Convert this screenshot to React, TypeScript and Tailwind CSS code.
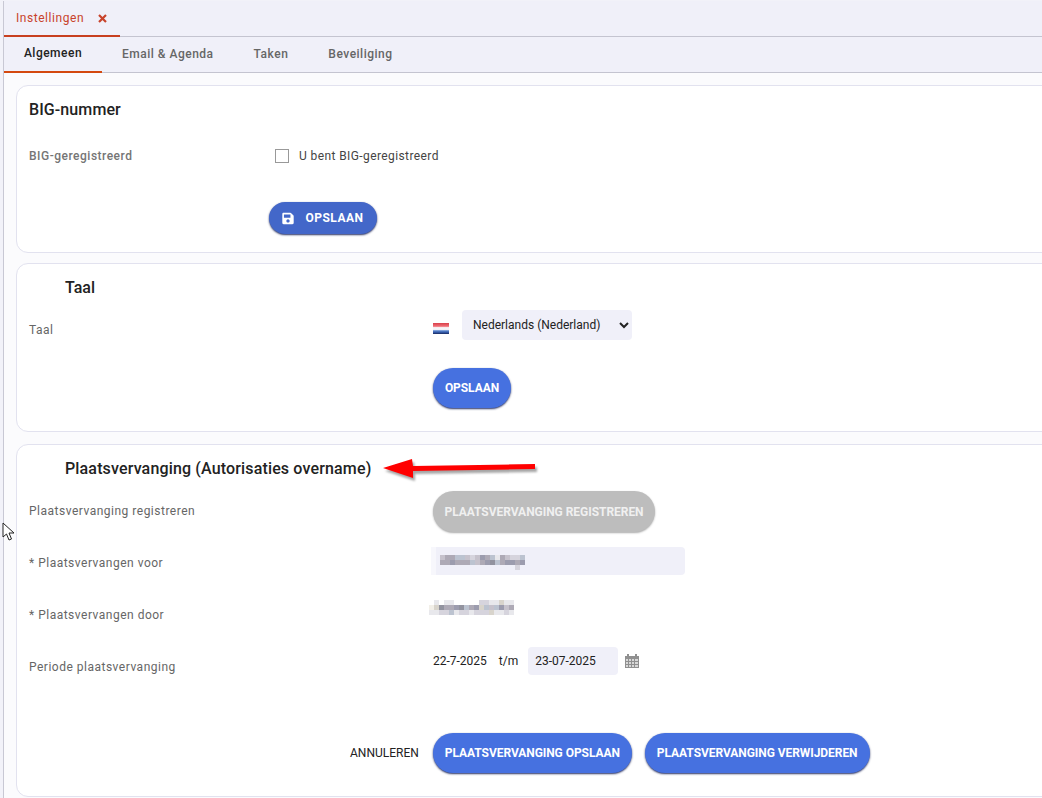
import type { ReactNode } from 'react'

const font = "font-['Roboto',sans-serif]"

const Label = ({ children, className = '' }: { children: ReactNode; className?: string }) => (
  <div className={`w-[404px] shrink-0 text-[12px] tracking-[0.5px] text-[#666] ${className}`}>{children}</div>
)

const Pill = ({ children, className = '' }: { children: ReactNode; className?: string }) => (
  <button className={`h-[40px] rounded-full bg-[#4671e0] px-3 text-[12px] font-bold tracking-[-0.06px] text-white shadow-[0_1px_2px_rgba(15,25,80,0.9)] ${className}`}>
    {children}
  </button>
)

const Mosaic = ({ rows, colors, w, h }: { rows: string[]; colors: Record<string, string>; w: number; h: number }) => (
  <svg width={w} height={h} viewBox={`0 0 ${w} ${h}`} shapeRendering="crispEdges" className="block">
    {rows.map((row, y) =>
      row.split('').map((c, x) => (colors[c] ? <rect key={`${x}-${y}`} x={x * 5} y={y * 5} width="5" height="5" fill={colors[c]} /> : null))
    )}
  </svg>
)

const colorsMosaic: Record<string, string> = {
  a: '#c6c2cc', b: '#aeaab6', c: '#bcc3d0', d: '#d6d4dd', e: '#9c9cae', f: '#e8e8ec', g: '#92939f', h: '#d8d4cc', i: '#f2efe8',
}

export default function App() {
  return (
    <div className={`${font} relative h-[798px] w-[1042px] overflow-hidden bg-[#f2f2f9] pl-[3px] pt-[1px]`}>
      <div className="min-h-[797px] border-l border-[#c8c8d4] bg-[#fbfbfd]">
        <div className="flex h-[36px] border-b border-[#c4c4d0] bg-[#f0f0f9]">
          <div className="flex h-[36px] w-[116px] items-center gap-[14px] border-b-2 border-[#c8401f] pl-3 text-[12px] tracking-[0.55px] text-[#c8432b]">
            Instellingen
            <svg width="9" height="9" viewBox="0 0 9 9" stroke="#c8432b" strokeWidth="2.2" fill="none">
              <path d="M1 1l7 7M8 1l-7 7" />
            </svg>
          </div>
        </div>
        <div className="flex h-[36px] border-b border-[#c4c4d0] bg-[#f0f0f9] text-[12px] font-medium tracking-[0.5px]">
          <div className="flex h-[36px] w-[98px] items-center justify-center border-b-2 border-[#d4490f] pb-[2px] text-[#222]">Algemeen</div>
          <div className="ml-[20px] flex h-[33px] items-center text-[#666]">Email &amp; Agenda</div>
          <div className="ml-[40px] flex h-[33px] items-center text-[#666]">Taken</div>
          <div className="ml-[40px] flex h-[33px] items-center text-[#666]">Beveiliging</div>
        </div>

        <div className="pl-[12px] pt-[12px]">
          <section className="h-[168px] w-[1100px] rounded-xl border border-[#e2e2ef] bg-white pl-3 pt-[14px]">
            <h2 className="text-[16px] font-medium leading-5 tracking-[0.1px] text-[#222]">BIG-nummer</h2>
            <div className="mt-[27px] flex h-[18px] items-center">
              <div className="w-[246px] text-[12px] font-medium tracking-[0.5px] text-[#757575]">BIG-geregistreerd</div>
              <span className="h-[14px] w-[14px] border border-[#999] bg-white" />
              <span className="ml-[10px] text-[12px] tracking-[0.4px] text-[#444]">U bent BIG-geregistreerd</span>
            </div>
            <button className="ml-[240px] mt-[37px] flex h-[32px] w-[108px] items-center justify-center gap-[11px] rounded-full bg-[#4367c9] text-[12px] font-bold tracking-[0.5px] text-white shadow-[0_1px_2px_rgba(15,25,80,0.9)]">
              <svg width="12" height="13" viewBox="0 0 448 512" fill="currentColor">
                <path d="M433.9 129.9l-83.9-83.9A48 48 0 0 0 316.1 32H48C21.5 32 0 53.5 0 80v352c0 26.5 21.5 48 48 48h352c26.5 0 48-21.5 48-48V163.9a48 48 0 0 0-14.1-34zM224 416c-35.3 0-64-28.7-64-64 0-35.3 28.7-64 64-64s64 28.7 64 64c0 35.3-28.7 64-64 64zm96-304.5V212c0 6.6-5.4 12-12 12H76c-6.6 0-12-5.4-12-12V108c0-6.6 5.4-12 12-12h228.5c3.2 0 6.2 1.3 8.5 3.5l3.5 3.5c2.2 2.2 3.5 5.3 3.500 8.5z" />
              </svg>
              OPSLAAN
            </button>
          </section>

          <section className="mt-[10px] h-[169px] w-[1100px] rounded-xl border border-[#e2e2ef] bg-white pl-3 pt-[14px]">
            <h2 className="pl-[36px] text-[16px] font-medium leading-5 text-[#222]">Taal</h2>
            <div className="mt-[12px] flex h-[30px] items-center">
              <Label className="pt-[10px]">Taal</Label>
              <svg width="16" height="11" viewBox="0 0 16 11" className="mt-[7px]">
                <defs>
                  <linearGradient id="nl" x1="0" x2="0" y1="0" y2="1">
                    <stop offset="0" stopColor="#d8404a" />
                    <stop offset="0.3" stopColor="#f07078" />
                    <stop offset="0.42" stopColor="#f8f8fa" />
                    <stop offset="0.62" stopColor="#f0f0f6" />
                    <stop offset="0.7" stopColor="#5c88d0" />
                    <stop offset="0.88" stopColor="#2c4f9c" />
                    <stop offset="1" stopColor="#1a2a5c" />
                  </linearGradient>
                </defs>
                <rect width="16" height="11" fill="url(#nl)" />
              </svg>
              <div className="ml-[13px] flex h-[30px] w-[170px] items-center justify-between rounded bg-[#f0f0f9] pl-[11px] pr-[3px] text-[12px] text-[#222]">
                Nederlands (Nederland)
                <svg width="10" height="7" viewBox="0 0 10 7" fill="none" stroke="#222" strokeWidth="2"><path d="M1 1l4 4 4-4" /></svg>
              </div>
            </div>
            <div className="pl-[404px] pt-[28px]">
              <Pill className="w-[78px] !px-0">OPSLAAN</Pill>
            </div>
          </section>

          <section className="mt-[12px] h-[353px] w-[1100px] rounded-xl border border-[#e2e2ef] bg-white pl-3 pt-[14px]">
            <h2 className="pl-[36px] text-[16px] font-medium leading-5 tracking-[0.15px] text-[#222]">Plaatsvervanging (Autorisaties overname)</h2>
            <div className="mt-[12px] flex h-[41px] items-center">
              <Label className="pb-[2px]">Plaatsvervanging registreren</Label>
              <button className="h-[41px] w-[222px] rounded-full bg-[#bdbdbd] text-[12px] font-bold tracking-[-0.04px] text-[#f0f0f0] shadow-[0_1px_2px_#aaa]">
                PLAATSVERVANGING REGISTREREN
              </button>
            </div>
            <div className="mt-[15px] flex h-[28px] items-center">
              <Label className="pt-[3px]">* Plaatsvervangen voor</Label>
              <div className="flex h-[28px] w-[254px] -translate-x-[2px] rounded-r border-l-[5px] border-[#f7f7fc] bg-[#f0f0f9] pl-[4px] pt-[8px]">
                <Mosaic
                  w={90}
                  h={15}
                  colors={colorsMosaic}
                  rows={['abbccadaebcfbaddc', 'bbebbbcabegcbeebe', '...............d.']}
                />
              </div>
            </div>
            <div className="mt-[24px] flex h-[29px]">
              <Label className="pt-[7px]">* Plaatsvervangen door</Label>
              <div className="-translate-x-[4px] pt-[1px]">
                <Mosaic
                  w={90}
                  h={15}
                  colors={colorsMosaic}
                  rows={['.f.ff.....ddffhff', 'ihgbbegcbehcaceab', 'ffddcfddfdddhffdf']}
                />
              </div>
            </div>
            <div className="mt-[19px] flex h-[28px] items-center text-[12px] text-[#222]">
              <Label className="pt-[12px]">Periode plaatsvervanging</Label>
              <span>22-7-2025</span>
              <span className="ml-[12px]">t/m</span>
              <div className="ml-[10px] flex h-[28px] w-[90px] items-center rounded bg-[#f0f0f9] pl-[7px]">23-07-2025</div>
              <svg width="14" height="14" viewBox="0 0 14 14" className="ml-[7px]">
                <rect y="2" width="14" height="12" fill="#d8d8d8" />
                <path d="M0 2h2V0h2v2h6V0h2v2h2v12H0zM1 5v2h2V5zm3 0v2h2V5zm3 0v2h2V5zm3 0v2h3V5zM1 8v2h2V8zm3 0v2h2V8zm3 0v2h2V8zm3 0v2h3V8zM1 11v2h2v-2zm3 0v2h2v-2zm3 0v2h2v-2zm3 0v2h3v-2z" fill="#909090" fillRule="evenodd" />
              </svg>
            </div>
            <div className="mt-[58px] flex items-center pl-[321px]">
              <span className="text-[12px] text-[#222]">ANNULEREN</span>
              <Pill className="ml-[14px]">PLAATSVERVANGING OPSLAAN</Pill>
              <Pill className="ml-[13px]">PLAATSVERVANGING VERWIJDEREN</Pill>
            </div>
          </section>
        </div>
      </div>

      <svg className="absolute left-[383px] top-[456px] drop-shadow-[2px_3px_1px_rgba(0,0,0,0.35)]" width="156" height="26" viewBox="0 0 156 26">
        <path d="M0 12L29 3l1 7 122-2v5L30 15l0 7z" fill="#f00" />
      </svg>
      <svg className="absolute left-[2px] top-[522px]" width="13" height="20" viewBox="0 0 13 20">
        <path d="M1 1v14l3.500-3 2.500 6 2.500-1-2.500-6h5z" fill="#fff" stroke="#222" strokeWidth="1" />
      </svg>
    </div>
  )
}
